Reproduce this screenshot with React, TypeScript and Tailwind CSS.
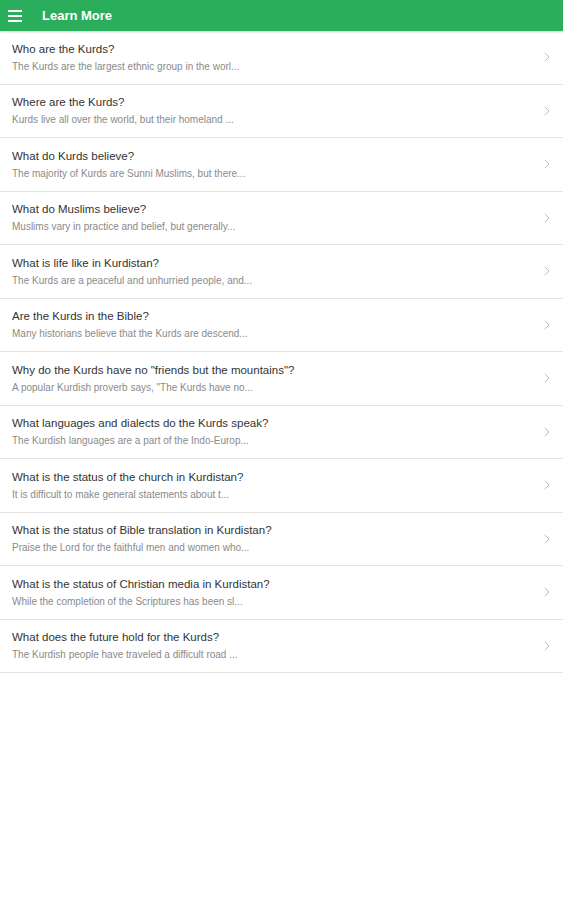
import { ChevronRight } from 'lucide-react';

type Topic = {
    title: string;
    summary: string;
};

const topics: Topic[] = [
    { title: 'Who are the Kurds?', summary: 'The Kurds are the largest ethnic group in the worl...' },
    { title: 'Where are the Kurds?', summary: 'Kurds live all over the world, but their homeland ...' },
    { title: 'What do Kurds believe?', summary: 'The majority of Kurds are Sunni Muslims, but there...' },
    { title: 'What do Muslims believe?', summary: 'Muslims vary in practice and belief, but generally...' },
    { title: 'What is life like in Kurdistan?', summary: 'The Kurds are a peaceful and unhurried people, and...' },
    { title: 'Are the Kurds in the Bible?', summary: 'Many historians believe that the Kurds are descend...' },
    { title: 'Why do the Kurds have no "friends but the mountains"?', summary: 'A popular Kurdish proverb says, "The Kurds have no...' },
    { title: 'What languages and dialects do the Kurds speak?', summary: 'The Kurdish languages are a part of the Indo-Europ...' },
    { title: 'What is the status of the church in Kurdistan?', summary: 'It is difficult to make general statements about t...' },
    { title: 'What is the status of Bible translation in Kurdistan?', summary: 'Praise the Lord for the faithful men and women who...' },
    { title: 'What is the status of Christian media in Kurdistan?', summary: 'While the completion of the Scriptures has been sl...' },
    { title: 'What does the future hold for the Kurds?', summary: 'The Kurdish people have traveled a difficult road ...' },
];

export default function App() {
    return (
        <div className="min-h-[900px] w-full bg-white font-['Liberation_Sans',Arial,sans-serif]">
            <header className="flex h-[31px] items-center bg-[#2aae5c] shadow-[0_1px_2px_rgba(0,0,0,0.2)]">
                <div className="ml-[8px] flex w-[14px] flex-col gap-[3px]">
                    <span className="h-[2px] w-full bg-white" />
                    <span className="h-[2px] w-full bg-white" />
                    <span className="h-[2px] w-full bg-white" />
                </div>
                <h1 className="ml-[20px] text-[13px] font-bold text-white">Learn More</h1>
            </header>
            <ul>
                {topics.map((topic) => (
                    <li
                        key={topic.title}
                        className="flex h-[53.5px] items-center justify-between border-b border-[#e4e4e4] pl-[12px] pr-[8px]"
                    >
                        <div className="flex flex-col gap-[5px]">
                            <span className="text-[11.5px] leading-[13px] text-[#333]">{topic.title}</span>
                            <span className="text-[10px] leading-[11px] text-[#8a8a8a]">{topic.summary}</span>
                        </div>
                        <ChevronRight className="h-[16px] w-[16px] text-[#bdbdbd]" strokeWidth={1.5} />
                    </li>
                ))}
            </ul>
        </div>
    );
}
